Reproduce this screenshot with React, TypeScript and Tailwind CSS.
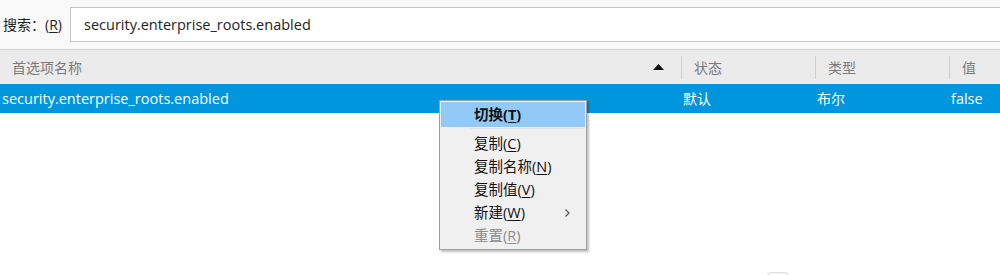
const font = { fontFamily: '"Open Sans", "Noto Sans CJK SC", sans-serif' };

function Mnemonic({ label, keyChar }: { label: string; keyChar: string }) {
  return (
    <>
      {label}(<span className="underline underline-offset-2">{keyChar}</span>)
    </>
  );
}

function MenuItem({
  label,
  keyChar,
  disabled,
  submenu,
}: {
  label: string;
  keyChar: string;
  disabled?: boolean;
  submenu?: boolean;
}) {
  return (
    <div
      className={`flex items-center h-[23px] pl-[34px] pr-3 text-[14.5px] ${
        disabled ? 'text-[#8d8d8d]' : 'text-[#111]'
      }`}
    >
      <span className="flex-1">
        <Mnemonic label={label} keyChar={keyChar} />
      </span>
      {submenu && (
        <svg width="7" height="10" viewBox="0 0 7 10" className="mr-[3px]">
          <path d="M1.5 1.5 L5 5 L1.5 8.5" fill="none" stroke="#555" strokeWidth="1.2" />
        </svg>
      )}
    </div>
  );
}

export default function App() {
  return (
    <div className="relative w-[1000px] h-[275px] bg-white overflow-hidden" style={font}>
      {/* search bar */}
      <div className="flex items-center h-[50px] bg-[#f9f9f9] border-b border-[#d3d3d3] pl-[3px]">
        <span className="text-[14px] text-[#222] w-[67px] shrink-0">
          搜索：<Mnemonic label="" keyChar="R" />
        </span>
        <div className="flex items-center h-[35px] flex-1 -mr-[10px] bg-white border border-[#c5c5c5] pl-[13px] text-[14.5px] text-[#222]">
          security.enterprise_roots.enabled
        </div>
      </div>

      {/* header */}
      <div className="flex items-center h-[34px] bg-[#ebebeb] text-[14px] text-[#7b7b7b]">
        <div className="flex items-center w-[681px] pl-[12px] pr-[17px]">
          <span className="flex-1">首选项名称</span>
          <svg width="11" height="6" viewBox="0 0 11 6">
            <path d="M5.5 0 L11 6 L0 6 Z" fill="#111" />
          </svg>
        </div>
        <div className="w-[134px] h-[23px] flex items-center border-l border-[#cfcfcf] pl-[12px]">状态</div>
        <div className="w-[134px] h-[23px] flex items-center border-l border-[#cfcfcf] pl-[12px]">类型</div>
        <div className="flex-1 h-[23px] flex items-center border-l border-[#cfcfcf] pl-[12px]">值</div>
      </div>

      {/* row */}
      <div className="flex items-center h-[29px] bg-[#0096dd] text-white text-[14.5px]">
        <div className="w-[682px] pl-[2px]">security.enterprise_roots.enabled</div>
        <div className="w-[134px] pl-[1px] text-[14px]">默认</div>
        <div className="w-[134px] pl-[1px] text-[14px]">布尔</div>
        <div className="flex-1 pl-[1px]">false</div>
      </div>

      {/* context menu */}
      <div
        className="absolute left-[439px] top-[100px] w-[148px] bg-[#f0f0f0] border border-[#a0a0a0] pt-[1px] pb-[2px]"
        style={{ boxShadow: '2px 2px 2px rgba(0,0,0,0.25)' }}
      >
        <div className="mx-[1px] h-[25px] flex items-center pl-[33px] bg-[#91c9f7] text-[14.5px] font-bold text-[#111]">
          <Mnemonic label="切换" keyChar="T" />
        </div>
        <div className="ml-[30px] mr-[2px] h-[1px] bg-[#e3e3e3] mt-[1px] mb-[3px]" />
        <MenuItem label="复制" keyChar="C" />
        <MenuItem label="复制名称" keyChar="N" />
        <MenuItem label="复制值" keyChar="V" />
        <MenuItem label="新建" keyChar="W" submenu />
        <MenuItem label="重置" keyChar="R" disabled />
      </div>

      {/* small scrollbar hint at bottom */}
      <div className="absolute left-[767px] top-[272px] w-[22px] h-[8px] rounded-[4px] border border-[#dcdcdc] bg-[#fafafa]" />
    </div>
  );
}
